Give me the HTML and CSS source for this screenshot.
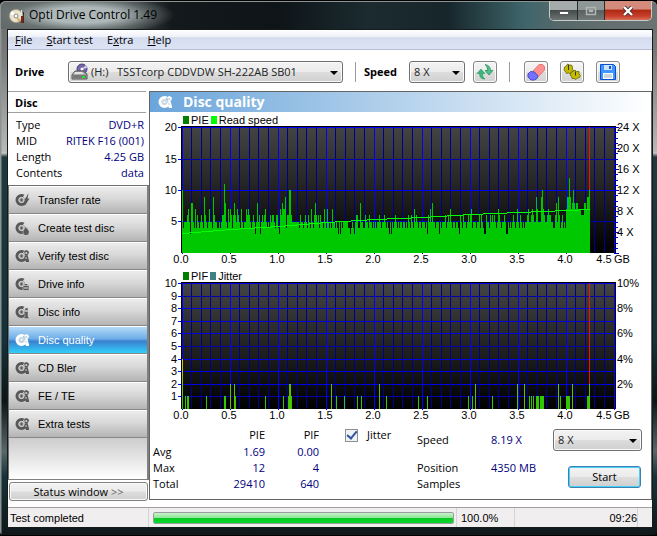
FILE: index.html
```html
<!DOCTYPE html>
<html lang="en">
<head>
<meta charset="utf-8">
<title>Opti Drive Control 1.49</title>
<link rel="stylesheet" href="styles.css">
</head>
<body>
<svg class="defs" aria-hidden="true">
  <defs>
    <linearGradient id="plotfill" x1="0" y1="0" x2="0" y2="1"><stop offset="0" stop-color="#444"/><stop offset="1" stop-color="#000"/></linearGradient>
    <linearGradient id="peak" x1="0" y1="0" x2="0" y2="1"><stop offset="0" stop-color="#e0c000"/><stop offset="1" stop-color="#20c800"/></linearGradient>
    <symbol id="disc" viewBox="0 0 15 14">
      <path d="M6.5 1a6 6 0 1 0 6 6h-3a3 3 0 1 1-3-3l1 .2 2-2.400A6 6 0 0 0 6.500 1z"/>
      <path d="M6.500 3.500a3.500 3.500 0 1 0 0 7a3.500 3.500 0 0 0 0-7z" opacity=".55"/>
      <circle cx="6.500" cy="7" r="2.600" fill="none" stroke="#ddd" stroke-width="1"/>
      <circle cx="6.500" cy="7" r="1"/>
    </symbol>
    <symbol id="quality" viewBox="0 0 15 14">
      <use href="#disc" width="15" height="14"/>
      <path d="M9 2.500l2-1.500 2.500 1 .5 2-1.500 2 1.500 5.500v1.500h-3l-1.500-3.500 1-2.500z"/>
      <circle cx="11.300" cy="4" r="1.100" fill="#ccc"/><path d="M10 8.500h2v1h-2z" fill="#ccc"/>
    </symbol>
  </defs>
</svg>
<div class="window">
  <header class="titlebar">
    <svg class="appicon" viewBox="0 0 16 16" aria-hidden="true"><circle cx="7" cy="8" r="6.500" fill="#ece5cc" stroke="#aaa185"/><path d="M7 8L3 2.500 1 6z" fill="#fff"/><path d="M7 8l2 6 3-2z" fill="#c9b87a"/><circle cx="7" cy="8" r="2" fill="#fff" stroke="#888"/><path d="M12 2h1v6h-1z" fill="#e6e6e6"/><path d="M12 8h2v7h-2z" fill="#8f1c12"/><path d="M14 4h1v11h-1z" fill="#333"/></svg>
    <h1>Opti Drive Control 1.49</h1>
    <div class="winbtns">
      <button class="min" aria-label="Minimize"><svg viewBox="0 0 12 12"><path d="M1.500 6.500h9v3h-9z" fill="#fff" stroke="#444" stroke-width=".8"/></svg></button>
      <button class="max" aria-label="Maximize" disabled><svg viewBox="0 0 12 12"><path d="M1.500 2.500h9v7h-9zM4.500 5.500h3v1h-3z" fill="none" stroke="#b0b5b5" stroke-width="1.500"/></svg></button>
      <button class="close" aria-label="Close"><svg viewBox="0 0 12 12"><path d="M2 2l8 8M10 2l-8 8" stroke="#4d3030" stroke-width="4"/><path d="M2 2l8 8M10 2l-8 8" stroke="#fff" stroke-width="2.400"/></svg></button>
    </div>
  </header>
  <div class="client">
    <nav class="menu"><a href="#file"><u>F</u>ile</a><a href="#start"><u>S</u>tart test</a><a href="#extra">E<u>x</u>tra</a><a href="#help"><u>H</u>elp</a></nav>
    <div class="toolbar">
      <label class="drivelabel" for="drive">Drive</label>
      <span class="combo drive">
        <svg viewBox="0 0 18 18" aria-hidden="true"><circle cx="11" cy="6" r="5" fill="#7566a8" stroke="#4a4278"/><path d="M11 6l4-4 1 3z" fill="#d9d0ef"/><circle cx="11" cy="6" r="1.500" fill="#fff"/><path d="M4 8h8l4 3v5H1v-4z" fill="#a5a7a5" stroke="#555"/><path d="M2 12h13v3H2z" fill="#777"/><path d="M4 9h7l2 2H3z" fill="#e2e2e2"/><path d="M11 13h3v2h-3z" fill="#19e619"/></svg>
        <select id="drive"><option>(H:) &nbsp; TSSTcorp CDDVDW SH-222AB SB01</option></select>
      </span>
      <span class="sep"></span>
      <label class="speedlabel" for="speed">Speed</label>
      <span class="combo speed"><select id="speed"><option>8 X</option></select></span>
      <button class="tool refresh" aria-label="Refresh"><svg viewBox="0 0 18 18"><path d="M5 6l4 4.500H6.500C6.500 13 7 14.500 9 16c-4 0-5.500-2-5.500-5.500H1z" fill="#35b878" stroke="#258a58" stroke-width=".5"/><path d="M13 12l4-4.500h-2.500C14.500 4 12.500 2 9 1.500 11 3 11.500 5 11.500 7.500H9z" fill="#45c488" stroke="#1f6e4a" stroke-width=".6"/></svg></button>
      <span class="sep"></span>
      <button class="tool erase" aria-label="Erase"><svg viewBox="0 0 18 18"><path d="M6 8l6-6.500h3.500l2 2V7l-6 6.500-4-1z" fill="#ff9090" stroke="#e07878"/><path d="M3.500 8.500l4 .5 3.500 4-1 2.500-2.500 1.500H4l-3-3V11z" fill="#7373ff" stroke="#4848c8"/></svg></button>
      <button class="tool" aria-label="Options"><svg viewBox="0 0 18 18"><g fill="#c4bb00" stroke="#5d5800" stroke-width=".7"><path d="M1.500 4l2-1 1-2 2 1h2l1 2v2l1 2-2 1-1 1.500-2-.5-2 .5-1-2-1.500-1z"/><path d="M8.500 9l2-1 1.500-1 1.500 1.500 2.500 0 0 2.500 1.500 1.500-1 2-2 .5-1.500 1.500-2-1-2 0-.5-2-1.500-1.500z"/></g><path d="M5.500 2v5M12.500 8.500v4" stroke="#333"/></svg></button>
      <button class="tool" aria-label="Save"><svg viewBox="0 0 18 18"><path d="M1.500 1.500h13l2 2v13h-15z" fill="#3d95ff" stroke="#0a4ed0"/><path d="M5 2h8v5H5z" fill="#cde2ff"/><path d="M10 3h2v3h-2z" fill="#1558c8"/><path d="M4 10h10v6H4z" fill="#fff"/><path d="M5 12h8M5 14h8" stroke="#9ab"/></svg></button>
    </div>
    <div class="body">
      <aside>
        <h2>Disc</h2>
        <dl>
          <div><dt>Type</dt><dd>DVD+R</dd></div>
          <div><dt>MID</dt><dd>RITEK F16 (001)</dd></div>
          <div><dt>Length</dt><dd>4.25 GB</dd></div>
          <div><dt>Contents</dt><dd>data</dd></div>
        </dl>
        <div class="tests">
          <button><svg viewBox="0 0 15 14"><use href="#disc" width="15" height="14"/><path d="M13.500 0L9.500 7h2l-2 6 5-7.500h-2z"/></svg>Transfer rate</button>
          <button><svg viewBox="0 0 15 14"><use href="#disc" width="15" height="14"/><path d="M10.500 5c-.5 3-2.500 4-2.500 6a3 3 0 0 0 6 1c1-3-2-3-3.500-7z" stroke="#ccc" stroke-width=".6"/></svg>Create test disc</button>
          <button><svg viewBox="0 0 15 14"><use href="#quality" width="15" height="14"/></svg>Verify test disc</button>
          <button><svg viewBox="0 0 15 14"><use href="#disc" width="15" height="14"/><path d="M8 8.500h6v5H8z" stroke="#ccc" stroke-width=".7"/><path d="M9 11h4" stroke="#ddd"/></svg>Drive info</button>
          <button><svg viewBox="0 0 15 14"><use href="#disc" width="15" height="14"/><path d="M10 3h3v2.500h-3zM9 6.500h4V12h1v1.500H9V12h1V8H9z" stroke="#ccc" stroke-width=".5"/></svg>Disc info</button>
          <button class="on"><svg viewBox="0 0 15 14"><use href="#quality" width="15" height="14"/></svg>Disc quality</button>
          <button><svg viewBox="0 0 15 14"><use href="#quality" width="15" height="14"/></svg>CD Bler</button>
          <button><svg viewBox="0 0 15 14"><use href="#quality" width="15" height="14"/></svg>FE / TE</button>
          <button><svg viewBox="0 0 15 14"><use href="#quality" width="15" height="14"/></svg>Extra tests</button>
        </div>
        <button class="statusbtn">Status window <span>&gt;&gt;</span></button>
      </aside>
      <main>
        <h2><svg viewBox="0 0 15 14" aria-hidden="true"><use href="#quality" width="15" height="14"/></svg>Disc quality</h2>
        <figure>
          <figcaption><i class="pie"></i>PIE<i class="read"></i>Read speed</figcaption>
          <svg id="pie-chart" class="chart" viewBox="0 0 501 142"></svg>
        </figure>
        <figure>
          <figcaption><i class="pie"></i>PIF<i class="jit"></i>Jitter</figcaption>
          <svg id="pif-chart" class="chart" viewBox="0 0 501 142"></svg>
        </figure>
        <section class="results">
          <table>
            <tr><td></td><th>PIE</th><th>PIF</th></tr>
            <tr><th>Avg</th><td>1.69</td><td>0.00</td></tr>
            <tr><th>Max</th><td>12</td><td>4</td></tr>
            <tr><th>Total</th><td>29410</td><td>640</td></tr>
          </table>
          <label class="jitter"><input type="checkbox" checked>Jitter</label>
          <dl class="live">
            <dt>Speed</dt><dd>8.19 X</dd>
            <dt>Position</dt><dd>4350 MB</dd>
            <dt>Samples</dt><dd></dd>
          </dl>
          <div class="actions">
            <span class="combo"><select aria-label="Test speed"><option>8 X</option></select></span>
            <button class="start">Start</button>
          </div>
        </section>
      </main>
    </div>
    <footer>
      <span class="msg">Test completed</span>
      <span class="prog"><progress value="100" max="100" aria-label="Progress"></progress></span>
      <span class="pct">100.0%</span>
      <span class="clock">09:26</span>
      <span class="grip"></span>
    </footer>
  </div>
</div>
<script src="charts.js"></script>
</body>
</html>
```
FILE: styles.css
```css
* { box-sizing: border-box; }
body { margin: 0; font: 11px/16px "Open Sans", "Noto Sans", sans-serif; color: #000; background: #000; }
h1, h2, dl, dd, figure { margin: 0; }
button, select { font: inherit; color: inherit; margin: 0; }
svg { display: block; flex: none; }
.defs { position: absolute; width: 0; height: 0; }

.window {
  min-height: 100vh; display: flex; flex-direction: column; padding: 0 4px 7px 7px;
  border: solid #000; border-width: 1px 0;
  border-radius: 6px 6px 4px 4px;
  background:
    linear-gradient(90deg, #8c9393 1px, transparent 2px),
    linear-gradient(#666b6b 0, #777 50px, #b8b8b8 150px, #c5c5c5 152px, #20393e 156px, #153238 340px, #0c1618 400px, #59676a 450px, #16343a 475px, #10171a 100%);
}
.titlebar {
  height: 28px; display: flex; align-items: center; margin: 0 -4px 0 -7px; padding-left: 8px;
  border-top: 1px solid #8d9494; border-left: 1px solid #8d9494; border-radius: 6px 6px 0 0;
  background:
    radial-gradient(ellipse 92px 20px at 82px 13px, rgba(190,200,200,.85) 40%, rgba(120,130,130,.5) 75%, transparent),
    linear-gradient(90deg, #646969 0, #4e5555 120px, #14191c 170px, #0e1418 42%, #1b2b30 56%, #16262b 68%, #3f666b 80%, #56686a 85%, #646e6e 92%, #6b7373 100%);
}
.appicon { width: 16px; height: 16px; }
h1 { flex: 1; font: 12px/18px "Open Sans", sans-serif; margin-left: 4px; padding-bottom: 1px; }
.winbtns { display: flex; align-self: flex-start; height: 20px; margin: -1px 5px 0 0; border: 1px solid #c5cccc; border-top: 0; border-radius: 0 0 5px 5px; overflow: hidden; }
.winbtns button { width: 28px; padding: 0; border: 0; border-right: 1px solid #272c2c; display: grid; place-items: center; background: linear-gradient(#a5aaaa 0 45%, #454c4c 50%, #6b7373); }
.winbtns .max { width: 27px; background: linear-gradient(#8f9696 0 45%, #59605f 50%, #717878); }
.winbtns .close { width: 46px; border-right: 0; background: linear-gradient(#d58b7c 0 40%, #b02a14 50%, #c8402c 80%, #d77058); }
.winbtns svg { width: 12px; height: 12px; }

.client { flex: 1; display: flex; flex-direction: column; background: #fff; border: 1px solid #151a1a; }
.menu { display: flex; gap: 14px; height: 20px; padding: 0 7px; border-bottom: 1px solid #b7bed4; background: linear-gradient(#fff 0, #eef1f8 35%, #d5dcee 40%, #dce3f5 100%); }
.menu a { color: #000; text-decoration: none; font-size: 11px; line-height: 20px; }

.toolbar { height: 41px; display: flex; align-items: center; padding: 2px 32px 0 7px; }
.toolbar label { font-weight: bold; }
.drivelabel { width: 53px; }
.combo { position: relative; display: flex; align-items: center; height: 22px; border: 1px solid #707070; border-radius: 3px; background: linear-gradient(#f3f3f3, #ebebeb 48%, #dddddd 52%, #cfcfcf); box-shadow: inset 0 0 0 1px #fafafa; }
.combo::after { content: ""; position: absolute; right: 4px; top: 9px; border: 4px solid transparent; border-top-color: #000; border-bottom: 0; pointer-events: none; }
.combo select { appearance: none; flex: 1; width: 100%; height: 20px; min-width: 0; border: 0; background: none; padding: 0 16px 0 4px; color: #222; }
.combo.drive { flex: 1; min-width: 200px; max-width: 480px; }
.combo.drive svg { width: 18px; height: 18px; margin-left: 2px; }
.combo.drive select { padding-left: 2px; }
.combo.speed { width: 56px; }
.sep { width: 1px; height: 20px; background: #999; margin: 0 8px 0 12px; }
.speedlabel { width: 45px; }
.tool { width: 24px; height: 22px; margin-left: 12px; padding: 0; display: grid; place-items: center; border: 1px solid #888; border-radius: 3px; background: linear-gradient(#f5f5f5, #ececec 48%, #ddd 52%, #d2d2d2); box-shadow: inset 0 0 0 1px #fafafa; }
.tool svg { width: 18px; height: 18px; }
.tool.refresh { margin-left: 8px; }
.tool.erase { margin-left: 6px; }

.body { flex: 1; display: flex; }
aside { width: 141px; display: flex; flex-direction: column; }
aside h2 { font: bold 11px/20px "Open Sans", sans-serif; height: 22px; margin-right: 3px; padding: 1px 0 0 7px; border: solid #a0a0a0; border-width: 1px 0; }
aside dl { padding: 4px 5px 4px 8px; height: 72px; }
aside dl div { display: flex; justify-content: space-between; }
dd { color: #000080; }
.tests { flex: 1; display: flex; flex-direction: column; border: 1px solid #707070; border-right: 2px solid #808080; border-bottom-color: #808080; background: linear-gradient(#ccc 250px, #d0d0d0 255px, #fff); }
.tests button { height: 28px; display: flex; align-items: center; gap: 8px; padding: 0 0 0 6px; border: 0; border-top: 1px solid #fff; border-bottom: 1px solid #888; background: linear-gradient(#ececec, #d8d8d8 45%, #b4b4b4); font: 11px/16px "Liberation Sans", sans-serif; text-align: left; }
.tests svg { width: 15px; height: 14px; fill: #585858; }
.tests .on { color: #fff; background: linear-gradient(#b5daf8, #6eaee8 45%, #3b80d0 55%, #30d0fa); }
.tests .on svg { fill: #fff; }
.statusbtn { height: 19px; margin: 2px 1px 6px 1px; padding: 0; border: 1px solid #808080; border-radius: 3px; background: linear-gradient(#f3f3f3, #ebebeb 48%, #ddd 52%, #cfcfcf); box-shadow: inset 0 0 0 1px #fafafa; font-size: 11px; line-height: 16px; }
.statusbtn span { color: #666; }

main { flex: 1; min-width: 0; border: 1px solid #646464; margin-bottom: 7px; }
main h2 { display: flex; align-items: center; gap: 10px; height: 20px; padding-left: 8px; color: #fff; background: linear-gradient(90deg, #6aa5db, #b5d2ec 50%, #fff); font: bold 14px/20px "Open Sans", sans-serif; }
main h2 svg { width: 15px; height: 14px; fill: #fff; }
figcaption { display: flex; align-items: center; height: 14px; padding: 1px 0 0 33px; font: 11px/14px "Liberation Sans", sans-serif; }
figcaption i { width: 6px; height: 8px; margin-right: 2px; background: #008000; }
figcaption .read, figcaption .jit { margin-left: 2px; }
figcaption .read { background: #0f0; }
figcaption .jit { background: #408080; }
.chart { width: 100%; height: auto; overflow: visible; shape-rendering: crispEdges; }
.chart text { font: 11px "Liberation Sans", sans-serif; }

.results { display: flex; padding: 2px 9px 0 3px; }
table { border-collapse: collapse; width: 166px; }
th, td { padding: 0; height: 16px; line-height: 16px; font-weight: normal; text-align: right; }
td { color: #000080; }
tr:first-child > * { height: 18px; }
th:first-child { text-align: left; }
td:last-child, th:last-child { width: 54px; }
.jitter { display: flex; align-items: center; gap: 9px; height: 18px; margin-left: 26px; width: 72px; }
input { appearance: none; width: 13px; height: 13px; margin: 0; border: 1px solid #8e8f8f; background: #eef1f5; display: grid; place-items: center; }
input:checked::after { content: ""; width: 4px; height: 8px; margin-top: -2px; border: solid #33549c; border-width: 0 2px 2px 0; transform: rotate(40deg); }
.live { display: grid; grid-template-columns: 74px 1fr; grid-template-rows: 28px 16px 16px; padding-top: 6px; flex: 1; align-content: start; }
.actions { width: 89px; padding-top: 3px; display: flex; flex-direction: column; align-items: flex-end; gap: 15px; }
.actions .combo { width: 100%; }
.start { width: 73px; height: 22px; margin-right: 1px; padding: 0; border: 1px solid #3c7fb1; border-radius: 3px; background: linear-gradient(#f3f3f3, #ebebeb 48%, #ddd 52%, #cfcfcf); box-shadow: inset 0 0 0 1px #48d0f8; font-size: 11px; line-height: 18px; }

footer { height: 20px; display: flex; border-top: 1px solid #a0a0a0; background: #f0eeee; font: 11px/21px "Liberation Sans", sans-serif; }
footer > span { border-right: 1px solid #d5d3d3; }
.msg { width: 141px; padding-left: 2px; }
.prog { flex: 1; padding: 4px 2px 3px 4px; }
progress { appearance: none; display: block; width: 100%; height: 12px; border: 1px solid #9c9c9c; border-radius: 2px; overflow: hidden; }
progress::-webkit-progress-bar { background: #e6e6e6; }
progress::-webkit-progress-value { background: linear-gradient(#c8f3cb, #93e79a 45%, #0cc826 50%, #06d82b); }
.pct { width: 58px; padding-left: 4px; }
.clock { width: 123px; text-align: right; }
footer .grip { width: 14px; border: 0; }
```
FILE: charts.js
```js
const W = 408;

function rect(x, y, w, h, fill) {
  return `<rect x="${x}" y="${y}" width="${w}" height="${h}" fill="${fill}"/>`;
}
function label(x, y, anchor, s) {
  return `<text x="${x}" y="${y + 4}" text-anchor="${anchor}">${s}</text>`;
}

// Plot area, grid and the GB axis shared by both charts.
function base(rows) {
  let s = rect(31, 0, 435, 127, '#000') + rect(32, 1, 433, 126, 'url(#plotfill)');
  rows.forEach(r => { s += rect(28, r.y, 3, 1, '#0000ff') + rect(32, r.y, 433, 1, r.color) + label(27, r.y, 'end', r.label); });
  for (let i = 0; i <= 45; i++) {
    if (i % 5) s += rect(32 + Math.floor(i * 9.6), 1, 1, 125, '#000090');
  }
  for (let i = 0; i <= 9; i++) {
    s += rect(32 + i * 48, 1, 1, 127, '#0000ff');
    s += label(31 + i * 48 - (i === 9 ? 9 : 0), 133, 'middle', (i / 2).toFixed(1));
  }
  return s + label(464, 133, 'start', 'GB');
}

// Error counts as offset:value pairs; offsets are sample columns.
const pieSpikes = '0:10 5:6 6:7 9:8 10:8 13:7 15:6 19:6 22:9 23:6 27:7 31:9 32:6 40:6 41:6 42:11 43:8 46:7 48:7 49:6 51:6 52:8 53:6 55:7 56:6 59:7 64:7 65:6 66:7 67:6 71:6 75:8 77:6 80:6 82:6 83:7 88:6 90:6 91:6 94:6 95:6 98:7 99:6 100:8 101:7 102:7 103:9 105:6 106:6 107:10 108:10 109:6 118:6 123:6 126:6 129:7 132:6 133:8 134:6 136:6 138:6 142:7 145:7 150:7 174:6 175:6 178:8 183:6 187:6 197:6 202:6 213:6 226:6 229:6 232:7 234:6 246:6 248:7 250:8 263:6 266:6 268:7 278:6 281:6 286:6 288:6 289:7 297:6 299:6 304:6 308:6 310:6 312:6 316:7 317:6 322:6 331:6 335:7 338:6 345:6 346:7 349:6 350:7 351:6 354:9 355:7 359:9 360:10 361:7 362:6 365:6 366:7 367:6 368:6 373:6 374:8 376:9 377:6 380:6 384:7 385:9 386:9 387:12 388:9 389:7 390:8 391:10 392:8 393:7 394:8 395:8 396:7 397:7 398:7 399:6 400:6 401:6 402:8 403:8 404:7 405:9 406:9 407:10';
const dips = [8, 73, 78, 97, 156, 158, 168, 172, 207, 209, 245, 257, 277, 302, 303, 324, 325];
const fours = [1, 12, 14, 17, 21, 25, 30, 35, 36, 38, 45, 50, 58, 61, 69, 85, 87, 93, 96, 104, 117, 121, 125, 128, 131, 137, 141, 144, 147, 149, 153, 155, 160, 166, 167, 169, 171, 176, 177, 181, 182, 186, 190, 192, 194, 199, 204, 206, 211, 215, 217, 220, 223, 225, 228, 231, 236, 239, 243, 253, 259, 264, 270, 273, 276, 280, 284, 290, 294, 298, 301, 307, 314, 319, 327, 329, 333, 337, 340, 342, 371, 372, 378, 381, 383];
const pie = Array(W).fill(5);
fours.forEach(i => { pie[i] = 4; });
dips.forEach(i => { pie[i] = 3; });
pieSpikes.split(' ').forEach(p => { const [i, v] = p.split(':'); pie[i] = +v; });

let s = base([
  { y: 1, color: '#0000ff', label: '20' }, { y: 33, color: '#0000b0', label: '15' },
  { y: 64, color: '#0000ff', label: '10' }, { y: 95, color: '#0000b0', label: '5' }
]);
s += rect(439, 1, 1, 126, '#f01010');
pie.forEach((v, i) => { const h = Math.round(v * 6.27); s += rect(32 + i, 127 - h, 1, h, '#00c800'); });
const speed = [[32, 107], [80, 103], [128, 100], [176, 96], [224, 93], [272, 91], [320, 88], [368, 86], [416, 84], [440, 83]];
for (let k = 0; k < speed.length - 1; k++) {
  const [x0, y0] = speed[k], [x1, y1] = speed[k + 1];
  for (let x = x0; x < x1; x++) s += rect(x, Math.round(y0 + (y1 - y0) * (x - x0) / (x1 - x0)), 1, 1, '#00ff00');
}
for (let i = 0; i <= 24; i++) {
  s += rect(465, Math.round(127 - i * 5.25), i % 4 ? 3 : 4, 1, '#0000c0');
  if (i && i % 4 === 0) s += label(467, Math.round(127 - i * 5.25), 'start', i + ' X');
}
document.getElementById('pie-chart').innerHTML = s;

const pif = '3:1 5:1 6:1 24:1 42:1 43:1 48:2 52:2 53:1 83:1 101:1 106:1 107:2 108:2 109:1 149:2 154:1 162:1 175:1 179:1 197:2 204:1 236:1 245:1 286:1 290:1 293:2 310:1 335:2 342:2 347:1 349:1 351:1 354:1 355:1 356:1 358:1 359:1 360:1 361:1 376:2 378:1 384:1 385:1 386:1 387:1 390:2 405:1 406:1 407:2';
const rows = [];
for (let v = 10; v >= 1; v--) rows.push({ y: Math.round(127 - v * 12.6), color: v === 1 || v === 5 || v === 9 ? '#0000b0' : '#0000ee', label: String(v) });
s = base(rows) + rect(439, 1, 1, 126, '#f01010') + rect(32, 77, 1, 50, 'url(#peak)');
pif.split(' ').forEach(p => { const [i, v] = p.split(':'); const h = Math.round(v * 12.6); s += rect(32 + +i, 127 - h, 1, h, v === '2' ? '#60c000' : '#30c800'); });
[10, 8, 6, 4, 2].forEach(v => { s += label(467, Math.round(127 - v * 12.6), 'start', v + '%'); });
document.getElementById('pif-chart').innerHTML = s;
```
